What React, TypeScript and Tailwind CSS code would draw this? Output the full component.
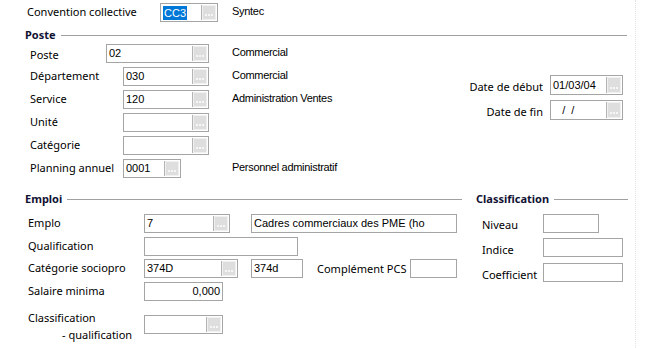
import React from "react";

const Dots = () => (
  <span className="flex gap-[1px]">
    <span className="w-[2px] h-[2px] bg-[#f6f6f6]" />
    <span className="w-[2px] h-[2px] bg-[#f6f6f6]" />
    <span className="w-[2px] h-[2px] bg-[#f6f6f6]" />
  </span>
);

const Btn = () => (
  <span className="my-[1px] mr-[1px] w-[15px] border-l border-[#b4b4b4] bg-[#f0f0f0] p-[1px] flex">
    <span className="flex-1 bg-[#dedede] flex items-end justify-center pb-[3px]">
      <Dots />
    </span>
  </span>
);

type FieldProps = {
  w: string;
  h?: string;
  value?: string;
  btn?: boolean;
  right?: boolean;
  sel?: boolean;
};

const Field = ({ w, h = "h-[19px]", value = "", btn = false, right = false, sel = false }: FieldProps) => (
  <div className={`flex shrink-0 border border-[#a5a5a5] bg-white ${w} ${h}`}>
    <div
      className={`flex-1 flex items-center px-[2px] font-['Liberation_Sans',Arial,sans-serif] text-[11px] text-black whitespace-pre overflow-hidden ${
        right ? "justify-end" : ""
      }`}
    >
      {sel ? <span className="bg-[#0078d7] text-white px-[1px] leading-[14px]">{value}</span> : value}
    </div>
    {btn && <Btn />}
  </div>
);

const Desc = ({ children }: { children: React.ReactNode }) => (
  <span className="-mt-[3px] font-['Liberation_Sans',Arial,sans-serif] text-[11px] tracking-[-0.3px] text-black whitespace-nowrap">
    {children}
  </span>
);

const Header = ({ title, w }: { title: string; w: string }) => (
  <div className={`flex items-center ${w}`}>
    <span className="font-bold text-[#111133]">{title}</span>
    <span className="ml-[5px] flex-1 h-px bg-[#a0a0a0]" />
  </div>
);

export default function App() {
  return (
    <div className="w-[662px] h-[348px] bg-white flex overflow-hidden font-['Noto_Sans',sans-serif] text-[11px] text-black">
      <div className="w-[635px] flex flex-col">
        {/* convention */}
        <div className="mt-[3px] h-[19px] flex items-center pl-[27px]">
          <span className="w-[133px]">Convention collective</span>
          <Field w="w-[58px]" value="CC3" btn sel />
          <span className="ml-[14px] flex">
            <Desc>Syntec</Desc>
          </span>
        </div>

        <div className="mt-[6px] h-[14px] flex pl-[25px]">
          <Header title="Poste" w="w-[602px]" />
        </div>

        {/* poste */}
        <div className="flex">
          <div className="mt-[2px] pl-[30px] flex flex-col gap-[4px]">
            <div className="h-[19px] flex items-center">
              <span className="w-[76px] mt-[4px]">Poste</span>
              <Field w="w-[103px]" value="02" btn />
              <span className="ml-[23px] flex">
                <Desc>Commercial</Desc>
              </span>
            </div>
            <div className="h-[19px] flex items-center">
              <span className="w-[93px]">Département</span>
              <Field w="w-[86px]" value="030" btn />
              <span className="ml-[23px] flex">
                <Desc>Commercial</Desc>
              </span>
            </div>
            <div className="h-[19px] flex items-center">
              <span className="w-[93px]">Service</span>
              <Field w="w-[86px]" value="120" btn />
              <span className="ml-[23px] flex">
                <Desc>Administration Ventes</Desc>
              </span>
            </div>
            <div className="h-[19px] flex items-center">
              <span className="w-[93px]">Unité</span>
              <Field w="w-[86px]" btn />
            </div>
            <div className="h-[19px] flex items-center">
              <span className="w-[93px]">Catégorie</span>
              <Field w="w-[86px]" btn />
            </div>
            <div className="h-[19px] flex items-center">
              <span className="w-[93px]">Planning annuel</span>
              <Field w="w-[58px]" value="0001" btn />
              <span className="ml-[51px] flex">
                <Desc>Personnel administratif</Desc>
              </span>
            </div>
          </div>

          <div className="ml-auto mr-[12px] mt-[32px] flex flex-col gap-[4px] items-end">
            <div className="flex items-center">
              <span className="mt-[5px] mr-[7px]">Date de début</span>
              <Field w="w-[73px]" h="h-[20px]" value="01/03/04" btn />
            </div>
            <div className="flex items-center">
              <span className="mt-[4px] mr-[7px]">Date de fin</span>
              <Field w="w-[73px]" h="h-[20px]" value="   /  /" btn />
            </div>
          </div>
        </div>

        <div className="mt-[14px] h-[14px] flex pl-[25px]">
          <Header title="Emploi" w="w-[437px]" />
          <div className="ml-[14px] flex">
            <Header title="Classification" w="w-[152px]" />
          </div>
        </div>

        {/* emploi */}
        <div className="flex mt-[8px]">
          <div className="pl-[28px] flex flex-col">
            <div className="h-[19px] flex items-center">
              <span className="w-[116px]">Emplo</span>
              <Field w="w-[86px]" value="7" btn />
              <span className="ml-[21px]" />
              <Field w="w-[206px]" value="Cadres commerciaux des PME (ho" />
            </div>
            <div className="mt-[4px] h-[19px] flex items-center">
              <span className="w-[116px]">Qualification</span>
              <Field w="w-[154px]" />
            </div>
            <div className="mt-[3px] h-[19px] flex items-center">
              <span className="w-[116px]">Catégorie sociopro</span>
              <Field w="w-[94px]" value="374D" btn />
              <span className="ml-[13px]" />
              <Field w="w-[52px]" value="374d" />
              <span className="ml-[14px] w-[93px] mt-[2px]">Complément PCS</span>
              <Field w="w-[47px]" />
            </div>
            <div className="mt-[4px] h-[19px] flex items-center">
              <span className="w-[116px]">Salaire minima</span>
              <Field w="w-[79px]" value="0,000" right />
            </div>
            <div className="mt-[8px] flex items-start">
              <span className="w-[116px] flex flex-col leading-[17px]">
                <span>Classification</span>
                <span className="pl-[34px]">- qualification</span>
              </span>
              <span className="mt-[6px]">
                <Field w="w-[79px]" btn />
              </span>
            </div>
          </div>

          <div className="ml-[25px] flex flex-col">
            <div className="h-[19px] flex items-center">
              <span className="w-[61px] mt-[3px]">Niveau</span>
              <Field w="w-[56px]" />
            </div>
            <div className="mt-[5px] h-[19px] flex items-center">
              <span className="w-[61px] mt-[5px]">Indice</span>
              <Field w="w-[80px]" />
            </div>
            <div className="mt-[6px] h-[19px] flex items-center">
              <span className="w-[61px] mt-[5px]">Coefficient</span>
              <Field w="w-[80px]" />
            </div>
          </div>
        </div>
      </div>
      <div className="h-full border-l border-dotted border-[#e2e2e2]" />
    </div>
  );
}
